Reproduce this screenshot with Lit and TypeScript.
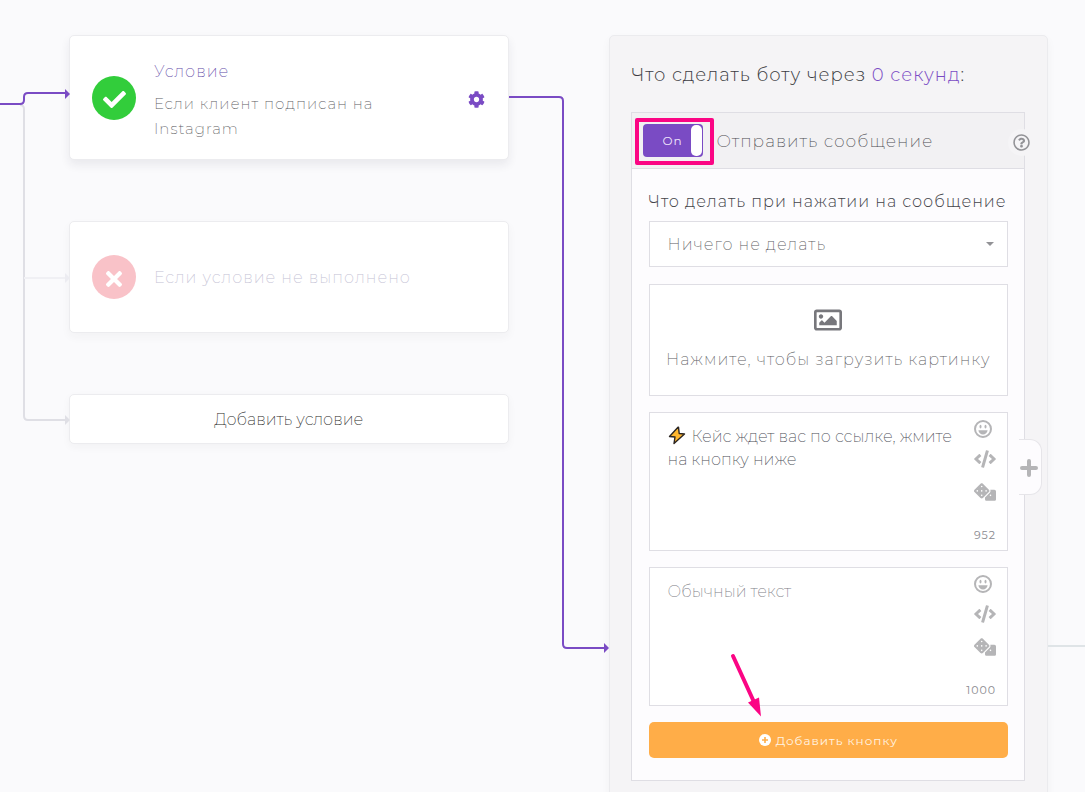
import { LitElement, html, svg, css } from "lit";
import { customElement, property } from "lit/decorators.js";

const CHECK =
  "M173.898 439.404l-166.4-166.4c-9.997-9.997-9.997-26.206 0-36.204l36.203-36.204c9.997-9.998 26.207-9.998 36.204 0L192 312.69 432.095 72.596c9.997-9.997 26.207-9.997 36.204 0l36.203 36.204c9.997 9.997 9.997 26.206 0 36.204l-294.4 294.401c-9.998 9.997-26.207 9.997-36.204-.001z";
const TIMES =
  "M242.72 256l100.07-100.07c12.28-12.28 12.28-32.19 0-44.48l-22.24-22.24c-12.28-12.28-32.19-12.28-44.48 0L176 189.28 75.93 89.21c-12.28-12.28-32.19-12.28-44.48 0L9.21 111.45c-12.28 12.28-12.28 32.19 0 44.48L109.28 256 9.21 356.07c-12.28 12.28-12.28 32.19 0 44.48l22.24 22.24c12.28 12.28 32.2 12.28 44.48 0L176 322.72l100.07 100.07c12.28 12.28 32.2 12.28 44.48 0l22.24-22.24c12.28-12.28 12.28-32.19 0-44.48L242.72 256z";
const COG =
  "M487.4 315.7l-42.6-24.6c4.3-23.2 4.3-47 0-70.2l42.6-24.6c4.9-2.8 7.1-8.6 5.5-14-11.1-35.6-30-67.8-54.7-94.6-3.8-4.1-10-5.1-14.8-2.3L380.8 110c-17.9-15.4-38.5-27.3-60.8-35.1V25.8c0-5.6-3.9-10.5-9.4-11.7-36.7-8.2-74.3-7.8-109.2 0-5.5 1.2-9.4 6.1-9.4 11.7V75c-22.2 7.9-42.8 19.8-60.8 35.1L88.7 85.5c-4.9-2.8-11-1.9-14.8 2.3-24.7 26.7-43.6 58.9-54.7 94.6-1.7 5.4.6 11.2 5.5 14L67.3 221c-4.3 23.2-4.3 47 0 70.2l-42.6 24.6c-4.9 2.8-7.1 8.6-5.5 14 11.1 35.6 30 67.8 54.7 94.6 3.8 4.1 10 5.1 14.8 2.3l42.6-24.6c17.9 15.4 38.5 27.3 60.8 35.1v49.2c0 5.6 3.9 10.5 9.4 11.7 36.7 8.2 74.3 7.8 109.2 0 5.5-1.2 9.4-6.1 9.4-11.7v-49.2c22.2-7.9 42.8-19.8 60.8-35.1l42.6 24.6c4.9 2.8 11 1.9 14.8-2.3 24.7-26.7 43.6-58.9 54.7-94.6 1.5-5.5-.7-11.3-5.6-14.1zM256 336c-44.1 0-80-35.9-80-80s35.9-80 80-80 80 35.9 80 80-35.9 80-80 80z";
const QUESTION =
  "M256 8C119.043 8 8 119.083 8 256c0 136.997 111.043 248 248 248s248-111.003 248-248C504 119.083 392.957 8 256 8zm0 448c-110.532 0-200-89.431-200-200 0-110.495 89.472-200 200-200 110.491 0 200 89.471 200 200 0 110.53-89.431 200-200 200zm107.244-255.2c0 67.052-72.421 68.084-72.421 92.863V300c0 6.627-5.373 12-12 12h-45.647c-6.627 0-12-5.373-12-12v-8.659c0-35.745 27.1-50.034 47.579-61.516 17.561-9.845 28.324-16.541 28.324-29.579 0-17.246-21.999-28.693-39.784-28.693-23.189 0-33.894 10.977-48.942 29.969-4.057 5.12-11.46 6.071-16.666 2.124l-27.824-21.098c-5.107-3.872-6.251-11.066-2.644-16.363C184.846 131.491 214.94 112 261.794 112c49.071 0 101.45 38.304 101.45 88.8zM298 368c0 23.159-18.841 42-42 42s-42-18.841-42-42 18.841-42 42-42 42 18.841 42 42z";
const IMAGE =
  "M464 64H48C21.49 64 0 85.49 0 112v288c0 26.51 21.49 48 48 48h416c26.51 0 48-21.49 48-48V112c0-26.51-21.49-48-48-48zm-6 336H54a6 6 0 0 1-6-6V118a6 6 0 0 1 6-6h404a6 6 0 0 1 6 6v276a6 6 0 0 1-6 6zM128 152c-22.091 0-40 17.909-40 40s17.909 40 40 40 40-17.909 40-40-17.909-40-40-40zM96 352h320v-80l-87.515-87.515c-4.686-4.686-12.284-4.686-16.971 0L192 304l-39.515-39.515c-4.686-4.686-12.284-4.686-16.971 0L96 304v48z";
const CODE =
  "M278.9 511.5l-61-17.7c-6.4-1.8-10-8.5-8.2-14.9L346.2 8.7c1.8-6.4 8.5-10 14.9-8.2l61 17.7c6.4 1.8 10 8.5 8.2 14.9L293.8 503.3c-1.9 6.4-8.5 10.1-14.9 8.2zm-114-112.2l43.5-46.4c4.6-4.9 4.3-12.7-.8-17.2L117 256l90.6-79.7c5.1-4.5 5.5-12.3.8-17.2l-43.5-46.4c-4.5-4.8-12.1-5.1-17-.5L3.8 247.2c-5.1 4.7-5.1 12.8 0 17.5l144.1 135.1c4.9 4.6 12.5 4.4 17-.5zm327.2.6l144.1-135.1c5.1-4.7 5.1-12.8 0-17.5L492.1 112.1c-4.8-4.5-12.4-4.3-17 .5L431.6 159c-4.6 4.9-4.3 12.7.8 17.2L523 256l-90.6 79.7c-5.1 4.5-5.5 12.3-.8 17.2l43.5 46.4c4.5 4.9 12.1 5.1 17 .6z";
const DICE =
  "M592 192H473.26c12.69 29.59 7.12 65.2-17 89.32L320 417.58V464c0 26.51 21.49 48 48 48h224c26.51 0 48-21.49 48-48V240c0-26.51-21.49-48-48-48zM480 376c-13.25 0-24-10.75-24-24 0-13.26 10.75-24 24-24s24 10.74 24 24c0 13.25-10.75 24-24 24zm-46.37-186.7L258.7 14.37c-19.16-19.16-50.23-19.16-69.39 0L14.37 189.3c-19.16 19.16-19.16 50.23 0 69.39L189.3 433.63c19.16 19.16 50.23 19.16 69.39 0L433.63 258.7c19.16-19.17 19.16-50.24 0-69.4zM96 248c-13.25 0-24-10.75-24-24 0-13.26 10.75-24 24-24s24 10.74 24 24c0 13.25-10.75 24-24 24zm128 128c-13.25 0-24-10.75-24-24 0-13.26 10.75-24 24-24s24 10.74 24 24c0 13.25-10.75 24-24 24zm0-128c-13.25 0-24-10.75-24-24 0-13.26 10.75-24 24-24s24 10.74 24 24c0 13.25-10.75 24-24 24zm0-128c-13.25 0-24-10.75-24-24 0-13.26 10.75-24 24-24s24 10.74 24 24c0 13.25-10.75 24-24 24zm128 128c-13.25 0-24-10.75-24-24 0-13.26 10.75-24 24-24s24 10.74 24 24c0 13.25-10.75 24-24 24z";

const glyph = (d: string, w: number, h: number, box = "0 0 512 512") =>
  html`<svg width=${w} height=${h} viewBox=${box} aria-hidden="true">
    ${svg`<path fill="currentColor" d=${d}></path>`}
  </svg>`;

const shared = css`
  *,
  *::before,
  *::after {
    box-sizing: border-box;
  }
  svg {
    display: block;
    flex: none;
  }
  button,
  select,
  textarea {
    font: inherit;
    letter-spacing: inherit;
    color: inherit;
    margin: 0;
  }
  button {
    display: flex;
    align-items: center;
    justify-content: center;
    padding: 0;
    border: 0;
    background: none;
    cursor: pointer;
  }
`;

@customElement("message-field")
export class MessageField extends LitElement {
  @property() label = "";
  @property() text = "";
  @property() hint = "";
  @property({ type: Number }) left = 0;
  @property({ type: Boolean }) bolt = false;

  static styles = [
    shared,
    css`
      :host {
        display: block;
        position: relative;
      }
      .field {
        display: flex;
        height: 139px;
        border: 1px solid #dfdee4;
        background: #fff;
      }
      textarea {
        flex: 1;
        min-width: 0;
        padding: 12px 0 0 18px;
        border: 0;
        outline: 0;
        resize: none;
        background: none;
        color: #4a4c55;
        font-size: 16px;
        line-height: 23px;
        letter-spacing: normal;
        overflow: hidden;
      }
      textarea::placeholder {
        color: #808087;
        opacity: 1;
      }
      .indented {
        text-indent: 24px;
      }
      .bolt {
        position: absolute;
        top: 14px;
        left: 19px;
      }
      .tools {
        display: flex;
        flex-direction: column;
        justify-content: space-between;
        align-items: flex-end;
        width: 44px;
        padding: 7px 11px 7px 0;
        color: #b5b5b7;
      }
      .buttons {
        display: flex;
        flex-direction: column;
        align-items: flex-start;
        gap: 12px;
        width: 22px;
      }
      .left {
        font-size: 11px;
        font-weight: 400;
        line-height: 16px;
        color: #8a8a8f;
      }
    `,
  ];

  render() {
    return html`
      <div class="field">
        <textarea
          class=${this.bolt ? "indented" : ""}
          aria-label=${this.label}
          placeholder=${this.hint}
          .value=${this.text}
        ></textarea>
        <div class="tools">
          <div class="buttons">
            <button aria-label="Эмодзи">
              <svg width="18" height="18" viewBox="0 0 18 18" fill="none">
                <circle cx="9" cy="9" r="8" stroke="currentColor" stroke-width="2"></circle>
                <ellipse cx="6.5" cy="6.6" rx="1" ry="1.9" fill="currentColor"></ellipse>
                <ellipse cx="11.5" cy="6.6" rx="1" ry="1.9" fill="currentColor"></ellipse>
                <path d="M4.4 10.2h9.2c-.3 2.6-2.2 4.3-4.6 4.3s-4.300-1.700-4.600-4.300z" fill="currentColor"></path>
              </svg>
            </button>
            <button aria-label="Код">${glyph(CODE, 22, 18, "0 0 640 512")}</button>
            <button aria-label="Случайный текст">${glyph(DICE, 22, 24, "0 0 640 512")}</button>
          </div>
          <span class="left">${this.left}</span>
        </div>
      </div>
      ${this.bolt
        ? html`<svg class="bolt" width="18" height="19" viewBox="0 0 18 19" role="img" aria-label="⚡">
            <path
              d="M10 1.200L1.500 10.500l5.500.5L6 17.500 16.500 8l-5.300-.5L10.500 1.200z"
              fill="#ffb72e"
              stroke="#2c2622"
              stroke-width="1.400"
              stroke-linejoin="round"
            ></path>
          </svg>`
        : ""}
    `;
  }
}

@customElement("app-root")
export class AppRoot extends LitElement {
  static styles = [
    shared,
    css`
      :host {
        display: block;
        font-family: Montserrat, Inter, "Open Sans", sans-serif;
        font-weight: 200;
        font-size: 16px;
        line-height: 25px;
        letter-spacing: 1px;
        color: #5c5c62;
      }
      .canvas {
        display: grid;
        grid-template-columns: 69px minmax(0, 1fr) 100px minmax(0, 1fr) 37px;
        align-items: start;
        height: 100vh;
        overflow: hidden;
        background: #fafafc;
      }
      .wires {
        overflow: visible;
        z-index: 1;
      }
      .steps {
        display: flex;
        flex-direction: column;
        gap: 61px;
        padding-top: 35px;
      }
      .card {
        display: flex;
        align-items: center;
        gap: 18px;
        min-height: 112px;
        padding: 18px 23px 18px 22px;
        border: 1px solid #ececef;
        border-radius: 5px;
        background: #fff;
        box-shadow: 0 4px 10px rgba(40, 40, 60, 0.04);
      }
      .active {
        min-height: 125px;
        box-shadow: 0 5px 10px rgba(40, 40, 60, 0.08);
      }
      .mark {
        display: grid;
        place-items: center;
        flex: none;
        width: 44px;
        height: 44px;
        padding-top: 3px;
        border-radius: 50%;
        color: #fff;
      }
      .yes {
        background: #32cd3b;
      }
      .no {
        background: #f9c2c8;
      }
      .body {
        flex: 1;
        display: flex;
        flex-direction: column;
        gap: 7px;
        min-width: 0;
      }
      .active .body {
        padding-top: 5px;
      }
      .body p,
      .body h2 {
        margin: 0;
        font-size: inherit;
        font-weight: inherit;
      }
      .body h2 {
        color: #5f4aa8;
      }
      .body p {
        max-width: 240px;
        font-size: 15px;
      }
      .body .muted {
        max-width: none;
        font-size: 16px;
        color: #c4c1d4;
      }
      .gear {
        padding-top: 4px;
        color: #7a4bc4;
      }
      .add-step {
        width: 100%;
        height: 50px;
        border: 1px solid #ececef;
        border-radius: 5px;
        background: #fff;
        box-shadow: 0 3px 8px rgba(40, 40, 60, 0.04);
        color: #1f1f26;
        letter-spacing: normal;
      }
      .panel {
        margin-top: 35px;
        padding: 22px 22px 40px 21px;
        border: 1px solid #ebebee;
        border-radius: 5px;
        background: #f5f4f6;
        box-shadow: 0 4px 10px rgba(40, 40, 60, 0.04);
      }
      .title {
        margin: 0 0 23px;
        padding: 3px 0 0 1px;
        font-size: 18px;
        font-weight: 300;
        line-height: 28px;
        color: #3c3c42;
        white-space: nowrap;
      }
      .title a {
        color: #7a4bc4;
        text-decoration: none;
      }
      .box {
        position: relative;
        border: 1px solid #dfdee4;
        background: #fdfcfe;
      }
      .head {
        position: relative;
        display: flex;
        align-items: center;
        gap: 14px;
        height: 56px;
        padding-left: 11px;
        border-bottom: 1px solid #dfdee4;
        background: #f2f1f3;
        font-size: 17px;
        color: #4c4c52;
      }
      .name {
        padding-top: 2px;
      }
      .switch {
        display: block;
        position: relative;
        width: 60px;
        height: 33px;
      }
      .switch input {
        appearance: none;
        position: absolute;
        inset: 0;
        margin: 0;
        border-radius: 4px;
        background: #7a4bc4;
      }
      .switch input::after {
        content: "";
        position: absolute;
        top: 1px;
        right: 1px;
        width: 11px;
        height: 31px;
        border-radius: 5px;
        background: #fff;
      }
      .on {
        position: relative;
        display: block;
        padding-left: 20px;
        font-size: 12px;
        font-weight: 400;
        line-height: 33px;
        color: #f0e6fc;
      }
      .frame {
        position: absolute;
        top: 5px;
        left: 3px;
        width: 79px;
        height: 47px;
        border: 4px solid #fb0584;
        border-radius: 2px;
        pointer-events: none;
      }
      .help {
        position: absolute;
        top: 16px;
        right: -11px;
        width: 27px;
        height: 27px;
        border-radius: 50%;
        background: #f5f4f6;
        color: #939397;
      }
      .form {
        display: flex;
        flex-direction: column;
        gap: 16px;
        padding: 20px 16px 22px 17px;
      }
      .row {
        display: flex;
        flex-direction: column;
        gap: 7px;
        margin-bottom: 1px;
      }
      .row label {
        font-weight: 300;
        white-space: nowrap;
        color: #44444a;
      }
      .select {
        display: grid;
        align-items: center;
      }
      .select select,
      .select svg {
        grid-area: 1 / 1;
      }
      .select svg {
        justify-self: end;
        margin-right: 14px;
        color: #929296;
        pointer-events: none;
      }
      select {
        appearance: none;
        width: 100%;
        height: 46px;
        padding: 0 34px 0 18px;
        border: 1px solid #dfdee4;
        border-radius: 0;
        background: #fff;
      }
      .upload {
        flex-direction: column;
        gap: 16px;
        height: 112px;
        border: 1px solid #dfdee4;
        background: #fff;
        white-space: nowrap;
      }
      .upload svg {
        color: #77777c;
      }
      .add-button {
        gap: 5px;
        height: 36px;
        border-radius: 5px;
        background: #ffad48;
        color: #fff4e4;
        font-size: 12px;
        font-weight: 400;
      }
      .tab {
        position: absolute;
        top: 326px;
        right: -18px;
        width: 23px;
        height: 56px;
        padding: 2px 2px 0 0;
        border: 1px solid #e6e5e9;
        border-left: 0;
        border-radius: 0 12px 12px 0;
        background: #fdfcfe;
        color: #b5b5b7;
      }
      .pointer {
        position: absolute;
        left: 97px;
        bottom: 63px;
        pointer-events: none;
      }
    `,
  ];

  render() {
    return html`
      <main class="canvas">
        <svg class="wires" width="69" height="440" viewBox="0 0 69 440" fill="none" aria-hidden="true">
          <g stroke="#dfdfe5" stroke-width="2">
            <path d="M20 105q4 0 4 4V416q0 4 4 4H65"></path>
            <path d="M24 278H65" stroke="#f0f0f4"></path>
          </g>
          <path d="M65 273l5 5-5 5z" fill="#ececf1"></path>
          <path d="M65 415l5 5-5 5z" fill="#dfdfe5"></path>
          <path d="M0 104H20q4 0 4-4V97q0-4 4-4H65" stroke="#7a4bc4" stroke-width="2"></path>
          <path d="M65 89l5 5-5 5z" fill="#7a4bc4"></path>
        </svg>

        <section class="steps">
          <article class="card active">
            <span class="mark yes">${glyph(CHECK, 23, 23)}</span>
            <div class="body">
              <h2>Условие</h2>
              <p>Если клиент подписан на Instagram</p>
            </div>
            <button class="gear" aria-label="Настройки">${glyph(COG, 17, 17)}</button>
          </article>
          <article class="card">
            <span class="mark no">${glyph(TIMES, 16, 24, "0 0 352 512")}</span>
            <div class="body"><p class="muted">Если условие не выполнено</p></div>
          </article>
          <button class="add-step">Добавить условие</button>
        </section>

        <svg class="wires" width="100" height="660" viewBox="0 0 100 660" fill="none" aria-hidden="true">
          <path d="M0 97H50q4 0 4 4V644q0 4 4 4H96" stroke="#7a4bc4" stroke-width="2"></path>
          <path d="M95 643l5 5-5 5z" fill="#7a4bc4"></path>
        </svg>

        <section class="panel">
          <h1 class="title">Что сделать боту через <a href="#delay">0 секунд</a>:</h1>
          <div class="box">
            <div class="head">
              <label class="switch">
                <input type="checkbox" role="switch" checked aria-label="Отправить сообщение" />
                <span class="on">On</span>
              </label>
              <span class="name">Отправить сообщение</span>
              <span class="frame"></span>
              <button class="help" aria-label="Справка">${glyph(QUESTION, 17, 17)}</button>
            </div>
            <div class="form">
              <div class="row">
                <label for="action">Что делать при нажатии на сообщение</label>
                <div class="select">
                  <select id="action">
                    <option>Ничего не делать</option>
                  </select>
                  <svg width="8" height="4" viewBox="0 0 8 4" aria-hidden="true">
                    <path d="M0 0h8L4 4z" fill="currentColor"></path>
                  </svg>
                </div>
              </div>
              <button class="upload">
                ${glyph(IMAGE, 28, 22, "0 56 512 400")}
                <span>Нажмите, чтобы загрузить картинку</span>
              </button>
              <message-field
                bolt
                label="Текст сообщения"
                text="Кейс ждет вас по ссылке, жмите на кнопку ниже"
                left="952"
              ></message-field>
              <message-field label="Обычный текст" hint="Обычный текст" left="1000"></message-field>
              <button class="add-button">
                <svg width="12" height="12" viewBox="0 0 12 12" aria-hidden="true">
                  <circle cx="6" cy="6" r="6" fill="#fff"></circle>
                  <path d="M6 3v6M3 6h6" stroke="#ffad48" stroke-width="1.600"></path>
                </svg>
                Добавить кнопку
              </button>
            </div>
            <button class="tab" aria-label="Добавить">
              <svg width="18" height="18" viewBox="0 0 18 18" aria-hidden="true">
                <path d="M9 2v14M2 9h14" stroke="currentColor" stroke-width="4" stroke-linecap="round"></path>
              </svg>
            </button>
            <svg class="pointer" width="34" height="64" viewBox="0 0 34 64" aria-hidden="true">
              <path d="M4 3l21 46" stroke="#fb0584" stroke-width="4" stroke-linecap="round"></path>
              <path d="M19 49.500l11-5 2 19z" fill="#fb0584"></path>
            </svg>
          </div>
        </section>

        <svg class="wires" width="37" height="660" viewBox="0 0 37 660" aria-hidden="true">
          <path d="M0 646H37" stroke="#dfe4e7" stroke-width="2"></path>
        </svg>
      </main>
    `;
  }
}
